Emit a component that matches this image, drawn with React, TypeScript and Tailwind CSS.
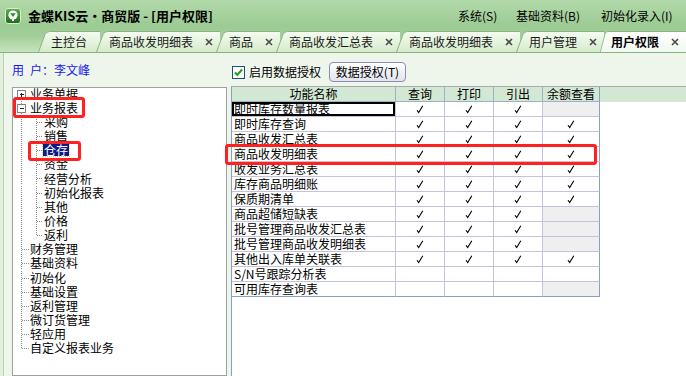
import clsx from 'clsx'

type TreeRow = {
  label: string
  level: 0 | 1
  box?: '+' | '-'
  first?: boolean
  last?: boolean
  selected?: boolean
}

const tree: TreeRow[] = [
  { label: '业务单据', level: 0, box: '+', first: true },
  { label: '业务报表', level: 0, box: '-' },
  { label: '采购', level: 1 },
  { label: '销售', level: 1 },
  { label: '仓存', level: 1, selected: true },
  { label: '资金', level: 1 },
  { label: '经营分析', level: 1 },
  { label: '初始化报表', level: 1 },
  { label: '其他', level: 1 },
  { label: '价格', level: 1 },
  { label: '返利', level: 1, last: true },
  { label: '财务管理', level: 0 },
  { label: '基础资料', level: 0 },
  { label: '初始化', level: 0 },
  { label: '基础设置', level: 0 },
  { label: '返利管理', level: 0 },
  { label: '微订货管理', level: 0 },
  { label: '轻应用', level: 0 },
  { label: '自定义报表业务', level: 0, last: true },
]

// 1 = 勾选, 0 = 空, g = 灰色不可用
type Cell = 1 | 0 | 'g'
const rows: [string, Cell, Cell, Cell, Cell][] = [
  ['即时库存数量报表', 1, 1, 1, 'g'],
  ['即时库存查询', 1, 1, 1, 1],
  ['商品收发汇总表', 1, 1, 1, 1],
  ['商品收发明细表', 1, 1, 1, 1],
  ['收发业务汇总表', 1, 1, 1, 1],
  ['库存商品明细账', 1, 1, 1, 1],
  ['保质期清单', 1, 1, 1, 1],
  ['商品超储短缺表', 1, 1, 1, 'g'],
  ['批号管理商品收发汇总表', 1, 1, 1, 'g'],
  ['批号管理商品收发明细表', 1, 1, 1, 'g'],
  ['其他出入库单关联表', 1, 1, 1, 1],
  ['S/N号跟踪分析表', 0, 0, 0, 0],
  ['可用库存查询表', 0, 0, 0, 'g'],
]

const colW = ['w-[164px]', 'w-[49px]', 'w-[49px]', 'w-[49px]', 'w-[57px]']

const tabs = [
  { label: '主控台', close: false },
  { label: '商品收发明细表', close: true },
  { label: '商品', close: true },
  { label: '商品收发汇总表', close: true },
  { label: '商品收发明细表', close: true },
  { label: '用户管理', close: true },
  { label: '用户权限', close: true, active: true },
]

function Logo() {
  return (
    <svg width="16" height="16" viewBox="0 0 16 16" className="shrink-0">
      <defs>
        <linearGradient id="lg" x1="0" y1="0" x2="0" y2="1">
          <stop offset="0" stopColor="#5fae4c" />
          <stop offset="1" stopColor="#1f6a22" />
        </linearGradient>
      </defs>
      <rect x="0.5" y="0.5" width="15" height="15" rx="2.5" fill="url(#lg)" stroke="#d8eed0" />
      <circle cx="8" cy="7" r="4.6" fill="#fff" />
      <path d="M5.2 5.2 L10.8 5.2 L8 9 Z" fill="#2e8a2e" />
      <rect x="7" y="9.5" width="2" height="3.5" fill="#fff" />
    </svg>
  )
}

function CloseX() {
  return (
    <svg width="8" height="8" viewBox="0 0 8 8" className="ml-[12px] shrink-0">
      <path d="M1 1 L7 7 M7 1 L1 7" stroke="#4a4a4a" strokeWidth="1.6" />
    </svg>
  )
}

function Tab({ label, close, active, idx }: { label: string; close: boolean; active?: boolean; idx: number }) {
  const top = active ? '#ffffff' : '#f4fbf0'
  const bottom = active ? '#f1f8ee' : '#d5ebcc'
  return (
    <div className={clsx('flex h-[21px] shrink-0', idx > 0 && '-ml-[4px]', active && 'flex-1')}>
      <svg width={active ? 9 : 13} height="21" viewBox="0 0 13 21" preserveAspectRatio="none" className="block shrink-0">
        <defs>
          <linearGradient id={'tab' + idx} x1="0" y1="0" x2="0" y2="1">
            <stop offset="0" stopColor={top} />
            <stop offset="1" stopColor={bottom} />
          </linearGradient>
        </defs>
        <path d="M0 21 L7 3.5 Q8.5 0.5 11.5 0.5 L13 0.5 L13 21 Z" fill={`url(#tab${idx})`} />
        <path d="M0.5 21 L7 3.5 Q8.5 0.5 11.5 0.5 L13 0.5" fill="none" stroke="#86b37e" />
      </svg>
      <div
        className={clsx(
          'flex flex-1 items-center whitespace-nowrap border-t border-[#86b37e] text-[#1a1a1a]',
          active
            ? 'bg-gradient-to-b from-white to-[#f1f8ee] pl-[2px] font-bold text-black'
            : 'bg-gradient-to-b from-[#f4fbf0] to-[#d5ebcc]',
          close ? 'pr-[7px]' : 'pr-[13px]',
        )}
      >
        <span className="leading-none">{label}</span>
        {close && <CloseX />}
      </div>
    </div>
  )
}

function Connector({ row }: { row: TreeRow }) {
  const dot = { stroke: '#8a8a8a', strokeDasharray: '1 1', shapeRendering: 'crispEdges' as const }
  if (row.level === 1) {
    return (
      <svg width="30" height="100%" viewBox="0 0 30 14" preserveAspectRatio="none" className="shrink-0">
        <line x1="8.5" y1="0" x2="8.5" y2="14" {...dot} />
        <line x1="23.5" y1="0" x2="23.5" y2={row.last ? 7 : 14} {...dot} />
        <line x1="24" y1="7.5" x2="30" y2="7.5" {...dot} />
      </svg>
    )
  }
  return (
    <svg width="16" height="100%" viewBox="0 0 16 14" preserveAspectRatio="none" className="shrink-0">
      {row.box ? (
        <>
          {!row.first && <line x1="8.5" y1="0" x2="8.5" y2="3" {...dot} />}
          <line x1="8.5" y1="12" x2="8.5" y2="14" {...dot} />
          <rect x="4.5" y="3.5" width="8" height="8" fill="#fff" stroke="#848484" shapeRendering="crispEdges" />
          <line x1="6.5" y1="7.5" x2="10.5" y2="7.5" stroke="#222" shapeRendering="crispEdges" />
          {row.box === '+' && <line x1="8.5" y1="5.5" x2="8.5" y2="9.5" stroke="#222" shapeRendering="crispEdges" />}
        </>
      ) : (
        <>
          <line x1="8.5" y1="0" x2="8.5" y2={row.last ? 7.5 : 14} {...dot} />
          <line x1="9" y1="7.5" x2="16" y2="7.5" {...dot} />
        </>
      )}
    </svg>
  )
}

function Check() {
  return (
    <svg width="8" height="9" viewBox="0 0 8 9">
      <path d="M1 5.2 L2.7 7.6 L6.8 0.8" fill="none" stroke="#000" strokeWidth="1.1" />
    </svg>
  )
}

export default function App() {
  return (
    <div className="relative h-[376px] w-[686px] overflow-hidden bg-[#eef6ec] font-['Noto_Sans_CJK_SC','Noto_Sans',sans-serif] text-[12px] text-black">
      {/* 标题栏 + 页签 */}
      <header className="h-[52px] bg-[linear-gradient(#b2d9aa,#9ccb93_50%,#a3cf9a_70%,#c6e4be)]">
        <div className="flex h-[31px] items-center pl-[5px]">
          <Logo />
          <span className="ml-[7px] text-[13px] font-bold leading-none">金蝶KIS云・商贸版 - [用户权限]</span>
          <nav className="ml-auto flex leading-none">
            <span className="w-[58px]">系统(S)</span>
            <span className="w-[85px]">基础资料(B)</span>
            <span className="w-[85px]">初始化录入(I)</span>
          </nav>
        </div>
        <div className="flex h-[21px] items-end overflow-hidden pl-[38px]">
          {tabs.map((t, i) => (
            <Tab key={i} idx={i} label={t.label} close={t.close} active={t.active} />
          ))}
        </div>
      </header>
      <div className="h-px bg-[#86b37e]" />

      <div className="flex h-[323px] bg-[#e3f0df] pl-[3px]">
        <div className="flex flex-1 border-l border-[#b6d3b1] bg-[#eef6ec]">
          {/* 左侧：用户与功能树 */}
          <aside className="flex w-[227px] shrink-0 flex-col pl-[8px]">
            <div className="flex h-[34px] items-center leading-none text-[#1616f2]">
              用<span className="ml-[6px]">户：</span>李文峰
            </div>
            <div className="w-[215px] flex-1 border border-[#a0a0a0] bg-white">
              <div className="-mt-[1.5px]">
                {tree.map((r, i) => (
                  <div key={i} className="flex h-[14.17px] items-stretch leading-none">
                    <Connector row={r} />
                    <span className="flex items-center">
                      <span
                        className={clsx(
                          'px-[1px]',
                          r.selected && 'bg-[#0c1a86] text-white outline-1 outline-dotted outline-[#d8d070]',
                        )}
                      >
                        {r.label}
                      </span>
                    </span>
                  </div>
                ))}
              </div>
            </div>
          </aside>

          {/* 右侧：授权表 */}
          <section className="flex flex-1 flex-col">
            <div className="flex h-[33px] items-center pl-[1px] pt-[5px]">
              <svg width="13" height="13" viewBox="0 0 13 13" className="shrink-0">
                <rect x="0.5" y="0.5" width="12" height="12" fill="#fff" stroke="#1d4f7c" />
                <path d="M3 6.5 L5.3 9 L10 3.5" fill="none" stroke="#1f9f1f" strokeWidth="2" />
              </svg>
              <span className="ml-[4px] leading-none">启用数据授权</span>
              <button className="ml-[8px] flex h-[20px] w-[77px] items-center justify-center rounded-[4px] border border-[#8c8cb2] bg-gradient-to-b from-white to-[#e2e4ee] leading-none">
                数据授权(T)
              </button>
            </div>
            <div className="flex-1 border-l border-t border-l-[#8a9ec0] border-t-[#a3aab2] bg-white">
              <div className="flex h-[15px] bg-[#d3e8d2] leading-none">
                {['功能名称', '查询', '打印', '引出', '余额查看'].map((h, i) => (
                  <div
                    key={h}
                    className={clsx(
                      colW[i],
                      'flex items-center justify-center border-b border-r border-[#9fb1c9]',
                      i === 4 && 'border-r-[#8a9ec0]',
                    )}
                  >
                    {h}
                  </div>
                ))}
              </div>
              {rows.map((r, ri) => (
                <div key={ri} className="flex h-[15px] leading-none">
                  <div
                    className={clsx(
                      colW[0],
                      'flex items-center whitespace-nowrap border-b border-r border-[#c6c2de] pl-[2px]',
                      ri === 0 && 'shadow-[inset_0_0_0_2px_#000]',
                      ri === rows.length - 1 && 'border-b-[#8a9ec0]',
                    )}
                  >
                    {r[0]}
                  </div>
                  {r.slice(1).map((c, ci) => (
                    <div
                      key={ci}
                      className={clsx(
                        colW[ci + 1],
                        'flex items-center justify-center border-b border-r border-[#c6c2de]',
                        c === 'g' && 'bg-[#efefef]',
                        ci === 3 && 'border-r-[#8a9ec0]',
                        ri === rows.length - 1 && 'border-b-[#8a9ec0]',
                      )}
                    >
                      {c === 1 && <Check />}
                    </div>
                  ))}
                </div>
              ))}
            </div>
          </section>
        </div>
      </div>

      {/* 红色标注框 */}
      <div className="absolute left-[13px] top-[97px] h-[21px] w-[72px] rounded-[3px] border-[3px] border-[#ff2020]" />
      <div className="absolute left-[28px] top-[141px] h-[20px] w-[53px] rounded-[3px] border-[3px] border-[#ff2020]" />
      <div className="absolute left-[225px] top-[144px] h-[21px] w-[372px] rounded-[3px] border-[3px] border-[#ff2020]" />
    </div>
  )
}
